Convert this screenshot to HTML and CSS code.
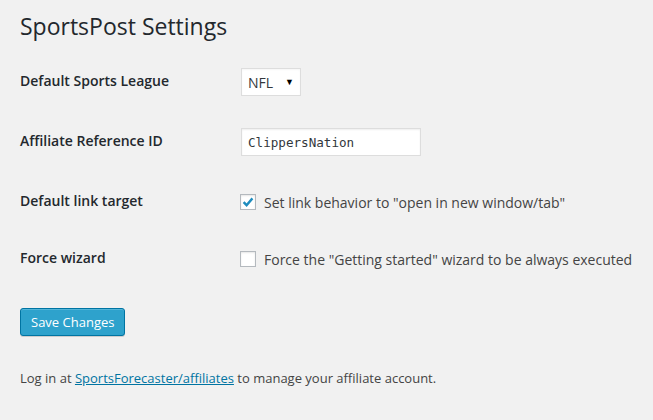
FILE: index.html
```html
<!DOCTYPE html>
<html>
<head>
<meta charset="utf-8">
<link rel="stylesheet" href="styles.css">
</head>
<body>
<div class="wrap">
  <h1 class="title">SportsPost Settings</h1>
  <form class="form">
    <div class="row">
      <div class="label">Default Sports League</div>
      <div class="field">
        <div class="select"><span>NFL</span><span class="arrow">&#9660;</span></div>
      </div>
    </div>
    <div class="row">
      <div class="label">Affiliate Reference ID</div>
      <div class="field">
        <div class="input">ClippersNation</div>
      </div>
    </div>
    <div class="row">
      <div class="label">Default link target</div>
      <div class="field">
        <span class="checkbox checked">
          <svg width="16" height="16" viewBox="0 0 16 16"><path d="M3.6 8.2 L6.6 11.2 L12.4 4.4" fill="none" stroke="#1e8cbe" stroke-width="2.4"/></svg>
        </span>
        <span class="check-text">Set link behavior to "open in new window/tab"</span>
      </div>
    </div>
    <div class="row row-last">
      <div class="label">Force wizard</div>
      <div class="field">
        <span class="checkbox"></span>
        <span class="check-text">Force the "Getting started" wizard to be always executed</span>
      </div>
    </div>
    <div class="actions">
      <button type="button" class="button">Save Changes</button>
    </div>
  </form>
  <p class="footer">Log in at <a href="#">SportsForecaster/affiliates</a> to manage your affiliate account.</p>
</div>
</body>
</html>
```

FILE: styles.css
```css
html, body {
  margin: 0;
  padding: 0;
  background: #f1f1f1;
}
body {
  font-family: "Open Sans", "Liberation Sans", sans-serif;
  color: #444;
  font-size: 13px;
}
.wrap {
  padding: 12px 20px 0 20px;
}
.title {
  margin: 0;
  font-size: 23px;
  font-weight: 400;
  line-height: 29px;
  color: #23282d;
}
.form {
  margin-top: 11px;
}
.row {
  display: flex;
  align-items: center;
  height: 60px;
}
.row-last {
  height: 54px;
}
.label {
  width: 221px;
  flex: none;
  font-size: 14px;
  font-weight: 600;
  line-height: 18px;
  margin-top: -2px;
  color: #23282d;
}
.field {
  display: flex;
  align-items: center;
}
.select {
  box-sizing: border-box;
  width: 60px;
  height: 28px;
  background: #fff;
  border: 1px solid #ddd;
  display: flex;
  align-items: center;
  justify-content: space-between;
  padding: 0 6px 0 6px;
  font-size: 14px;
  color: #32373c;
  box-shadow: inset 0 1px 2px rgba(0,0,0,0.04);
}
.arrow {
  font-size: 9px;
  color: #000;
  margin-top: -2px;
}
.input {
  box-sizing: border-box;
  width: 180px;
  height: 28px;
  background: #fff;
  border: 1px solid #ddd;
  display: flex;
  align-items: center;
  padding: 0 6px;
  font-family: "DejaVu Sans Mono", "Liberation Mono", monospace;
  font-size: 12.6px;
  color: #32373c;
  box-shadow: inset 0 1px 2px rgba(0,0,0,0.07);
}
.checkbox {
  box-sizing: border-box;
  display: inline-block;
  width: 16px;
  height: 16px;
  background: #fff;
  border: 1px solid #b4b9be;
  margin-left: -1px;
  margin-right: 8px;
  position: relative;
  box-shadow: inset 0 1px 2px rgba(0,0,0,0.1);
}
.checkbox svg {
  position: absolute;
  left: -1px;
  top: -1px;
}
.check-text {
  font-size: 14px;
  color: #444;
}
.actions {
  margin-top: 22px;
}
.button {
  box-sizing: border-box;
  height: 28px;
  padding: 0 10px;
  white-space: nowrap;
  background: #2ea2cc;
  border: 1px solid #0074a2;
  border-radius: 3px;
  color: #fff;
  font-family: "Open Sans", "Liberation Sans", sans-serif;
  font-size: 13px;
  line-height: 26px;
  box-shadow: inset 0 1px 0 rgba(120,200,230,0.5), 0 1px 0 rgba(0,0,0,0.15);
  cursor: pointer;
}
.footer {
  margin: 32px 0 0 0;
  font-size: 13px;
  line-height: 20px;
  color: #444;
}
.footer a {
  color: #0074a2;
  text-decoration: underline;
}
```
